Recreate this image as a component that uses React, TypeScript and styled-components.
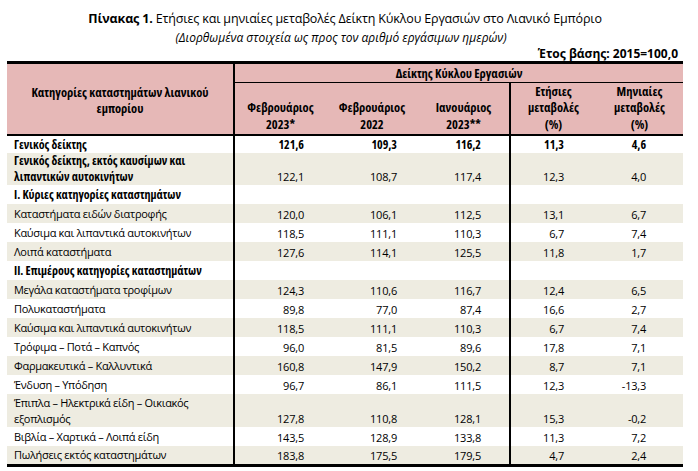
import React from 'react';
import styled, { createGlobalStyle } from 'styled-components';

const Global = createGlobalStyle`
  html, body { margin: 0; padding: 0; background: #ffffff; }
  body { font-family: "Open Sans", "Noto Sans", sans-serif; color: #000; }
`;

const PINK = '#e6b8b7';
const STRIPE = '#eeece1';

const Page = styled.div`
  width: 698px;
  height: 471px;
  box-sizing: border-box;
  padding: 10px 0 0 7px;
  overflow: hidden;
`;

const Block = styled.div`
  width: 676px;
  display: flex;
  flex-direction: column;
`;

const Title = styled.div`
  text-align: center;
  font-size: 12.5px;
  letter-spacing: -0.15px;
  line-height: 18px;
  b { font-weight: 700; }
`;

const Subtitle = styled.div`
  text-align: center;
  font-size: 12px;
  line-height: 16px;
  font-style: italic;
  margin-top: 2px;
  padding-right: 8px;
`;

const Base = styled.div`
  text-align: right;
  font-size: 12px;
  font-weight: 700;
  line-height: 15px;
  padding-right: 5px;
`;

const Table = styled.table`
  border-collapse: collapse;
  table-layout: fixed;
  width: 676px;
  font-size: 11px;
  border-top: 3px solid #000;
  border-bottom: 3px solid #000;
`;

const HeadCell = styled.th<{ $divider?: boolean; $under?: boolean; $h?: number }>`
  background: ${PINK};
  font-weight: 700;
  font-size: 12.5px;
  font-stretch: 75%;
  text-align: center;
  vertical-align: bottom;
  padding: 0;
  height: ${(p) => p.$h ?? 18}px;
  line-height: 16px;
  border-right: ${(p) => (p.$divider ? '2px solid #000' : 'none')};
  border-bottom: ${(p) => (p.$under ? '1px solid #000' : '2px solid #000')};
`;

const LeftHead = styled(HeadCell)`
  vertical-align: middle;
  padding-top: 4px;
`;

const HeadLine = styled.div<{ $last?: boolean }>`
  line-height: ${(p) => (p.$last ? '18px' : '16px')};
`;

const Row = styled.tr<{ $stripe: boolean; $h: number }>`
  background: ${(p) => (p.$stripe ? STRIPE : '#fff')};
  height: ${(p) => p.$h}px;
`;

const Label = styled.td<{ $bold?: boolean }>`
  padding: 0 0 0 7px;
  font-weight: ${(p) => (p.$bold ? 700 : 400)};
  font-size: ${(p) => (p.$bold ? '12px' : '11px')};
  font-stretch: ${(p) => (p.$bold ? '75%' : '100%')};
  letter-spacing: ${(p) => (p.$bold ? '0' : '-0.3px')};
  line-height: 16px;
  vertical-align: middle;
  border-right: 2px solid #000;
  white-space: nowrap;
`;

const Num = styled.td<{ $bold?: boolean; $pr: number; $divider?: boolean }>`
  text-align: right;
  vertical-align: bottom;
  padding: 0 ${(p) => p.$pr}px 1px 0;
  line-height: 15px;
  font-weight: ${(p) => (p.$bold ? 700 : 400)};
  font-size: ${(p) => (p.$bold ? '12px' : '11px')};
  font-stretch: ${(p) => (p.$bold ? '75%' : '100%')};
  letter-spacing: ${(p) => (p.$bold ? '0' : '-0.2px')};
  border-right: ${(p) => (p.$divider ? '2px solid #000' : 'none')};
`;

type RowData = {
  label: React.ReactNode;
  bold?: boolean;
  boldNums?: boolean;
  h?: number;
  v?: string[];
};

const rows: RowData[] = [
  { label: 'Γενικός δείκτης', bold: true, boldNums: true, h: 18, v: ['121,6', '109,3', '116,2', '11,3', '4,6'] },
  {
    label: (
      <>
        Γενικός δείκτης, εκτός καυσίμων και
        <br />
        λιπαντικών αυτοκινήτων
      </>
    ),
    bold: true,
    h: 32,
    v: ['122,1', '108,7', '117,4', '12,3', '4,0'],
  },
  { label: 'I. Κύριες κατηγορίες καταστημάτων', bold: true },
  { label: 'Καταστήματα ειδών διατροφής', v: ['120,0', '106,1', '112,5', '13,1', '6,7'] },
  { label: 'Καύσιμα και λιπαντικά αυτοκινήτων', v: ['118,5', '111,1', '110,3', '6,7', '7,4'] },
  { label: 'Λοιπά καταστήματα', v: ['127,6', '114,1', '125,5', '11,8', '1,7'] },
  { label: 'II. Επιμέρους κατηγορίες καταστημάτων', bold: true },
  { label: 'Μεγάλα καταστήματα τροφίμων', v: ['124,3', '110,6', '116,7', '12,4', '6,5'] },
  { label: 'Πολυκαταστήματα', v: ['89,8', '77,0', '87,4', '16,6', '2,7'] },
  { label: 'Καύσιμα και λιπαντικά αυτοκινήτων', v: ['118,5', '111,1', '110,3', '6,7', '7,4'] },
  { label: 'Τρόφιμα – Ποτά – Καπνός', v: ['96,0', '81,5', '89,6', '17,8', '7,1'] },
  { label: 'Φαρμακευτικά – Καλλυντικά', v: ['160,8', '147,9', '150,2', '8,7', '7,1'] },
  { label: 'Ένδυση – Υπόδηση', v: ['96,7', '86,1', '111,5', '12,3', '-13,3'] },
  {
    label: (
      <>
        Έπιπλα – Ηλεκτρικά είδη – Οικιακός
        <br />
        εξοπλισμός
      </>
    ),
    h: 33,
    v: ['127,8', '110,8', '128,1', '15,3', '-0,2'],
  },
  { label: 'Βιβλία – Χαρτικά – Λοιπά είδη', v: ['143,5', '128,9', '133,8', '11,3', '7,2'] },
  { label: 'Πωλήσεις εκτός καταστημάτων', v: ['183,8', '175,5', '179,5', '4,7', '2,4'] },
];

const widths = [227, 92, 92, 92, 86, 87];
const pads = [22, 21, 28, 32, 37];

export default function App() {
  return (
    <Page>
      <Global />
      <Block>
        <Title>
          <b>Πίνακας 1.</b> Ετήσιες και μηνιαίες μεταβολές Δείκτη Κύκλου Εργασιών στο Λιανικό Εμπόριο
        </Title>
        <Subtitle>(Διορθωμένα στοιχεία ως προς τον αριθμό εργάσιμων ημερών)</Subtitle>
        <Base>Έτος βάσης: 2015=100,0</Base>
        <Table>
          <colgroup>
            {widths.map((w, i) => (
              <col key={i} style={{ width: w }} />
            ))}
          </colgroup>
          <thead>
            <tr>
              <LeftHead rowSpan={2} $divider>
                Κατηγορίες καταστημάτων λιανικού
                <br />
                εμπορίου
              </LeftHead>
              <HeadCell colSpan={5} $under $h={18}>
                <HeadLine>Δείκτης Κύκλου Εργασιών</HeadLine>
              </HeadCell>
            </tr>
            <tr>
              <HeadCell $h={51}>
                <HeadLine>Φεβρουάριος</HeadLine>
                <HeadLine $last>2023*</HeadLine>
              </HeadCell>
              <HeadCell $h={51}>
                <HeadLine>Φεβρουάριος</HeadLine>
                <HeadLine $last>2022</HeadLine>
              </HeadCell>
              <HeadCell $h={51} $divider>
                <HeadLine>Ιανουάριος</HeadLine>
                <HeadLine $last>2023**</HeadLine>
              </HeadCell>
              <HeadCell $h={51}>
                <HeadLine>Ετήσιες</HeadLine>
                <HeadLine>μεταβολές</HeadLine>
                <HeadLine $last>(%)</HeadLine>
              </HeadCell>
              <HeadCell $h={51}>
                <HeadLine>Μηνιαίες</HeadLine>
                <HeadLine>μεταβολές</HeadLine>
                <HeadLine $last>(%)</HeadLine>
              </HeadCell>
            </tr>
          </thead>
          <tbody>
            {rows.map((r, i) => (
              <Row key={i} $stripe={i % 2 === 1} $h={r.h ?? 19}>
                <Label $bold={r.bold}>{r.label}</Label>
                {[0, 1, 2, 3, 4].map((c) => (
                  <Num key={c} $pr={pads[c]} $bold={r.boldNums} $divider={c === 2}>
                    {r.v ? r.v[c] : ''}
                  </Num>
                ))}
              </Row>
            ))}
          </tbody>
        </Table>
      </Block>
    </Page>
  );
}
